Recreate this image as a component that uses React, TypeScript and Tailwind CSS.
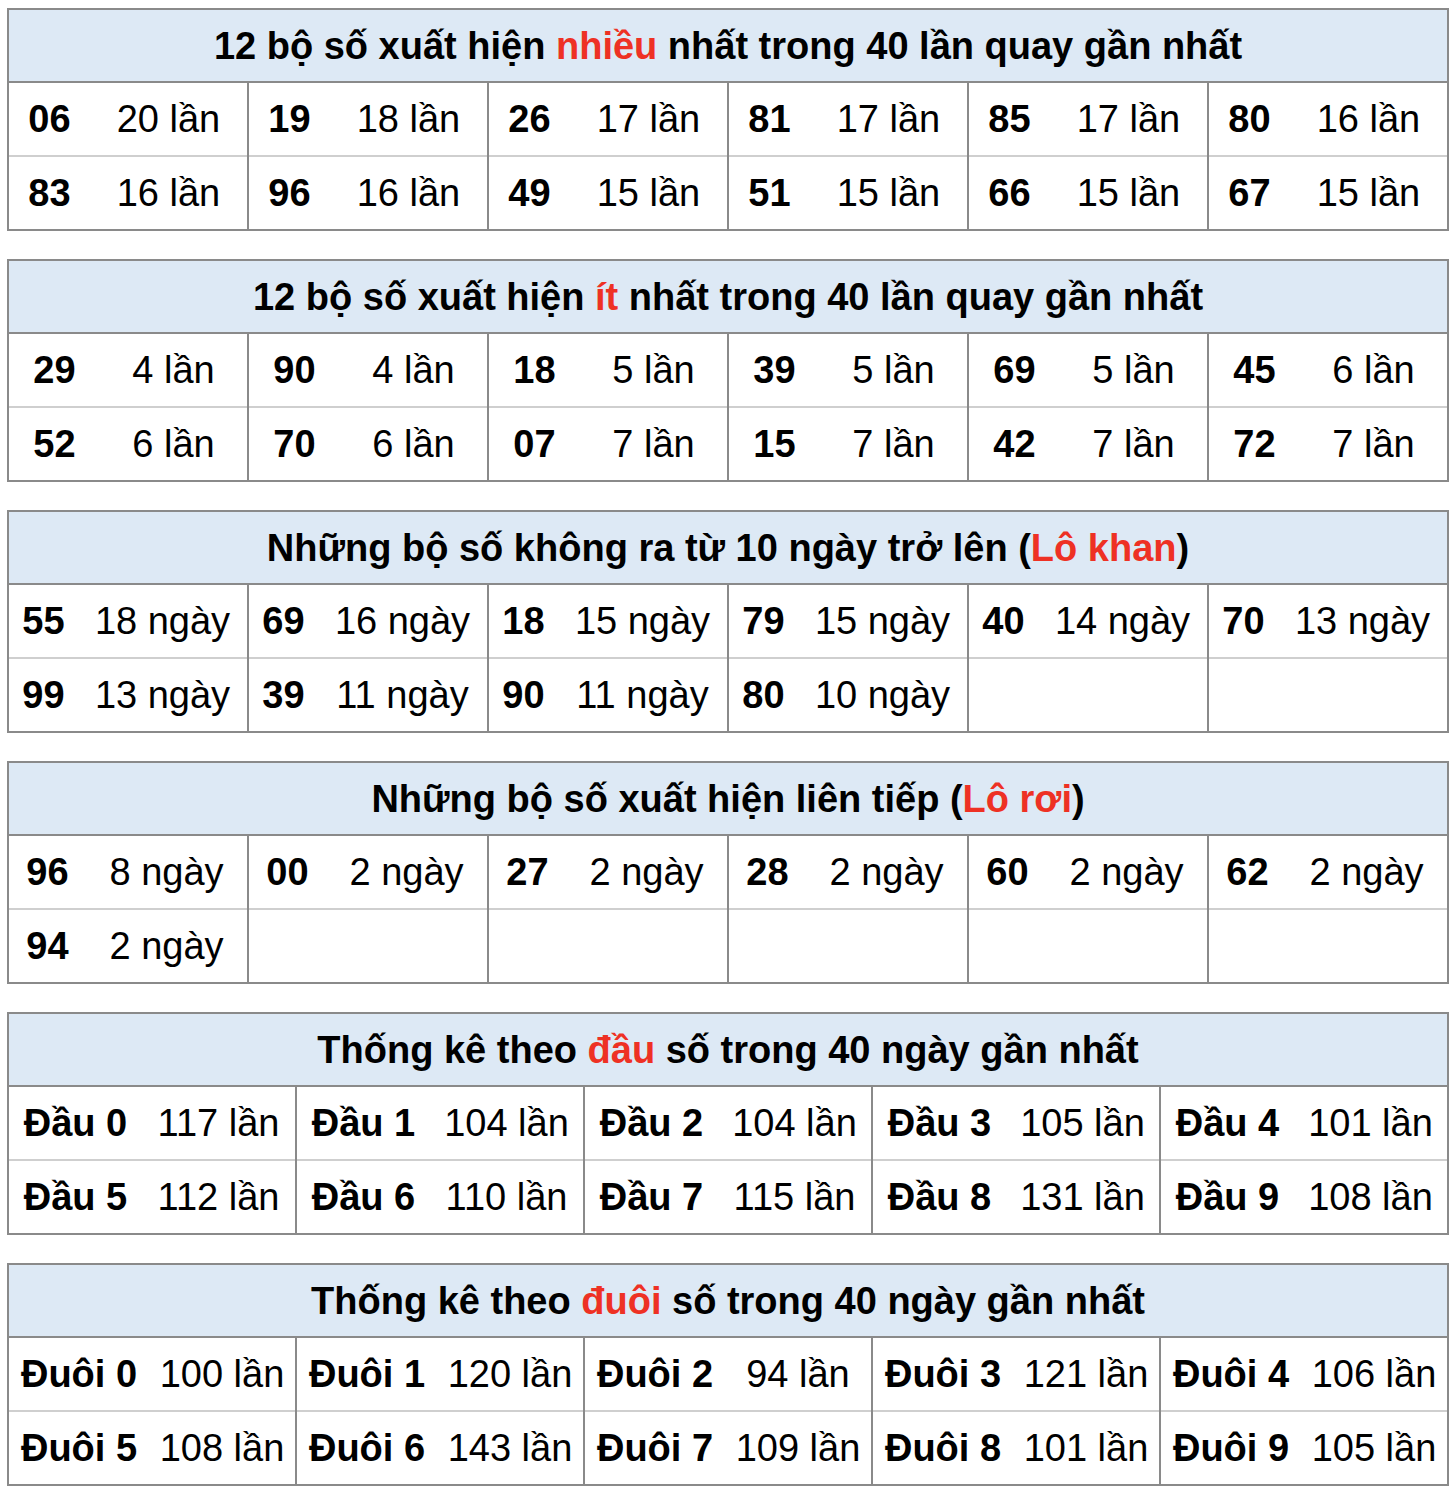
import React from "react";

type Cell = [string, string] | null;

const RED = "text-[#ee3124]";

function Table({
  title,
  cols,
  numW,
  rows,
}: {
  title: React.ReactNode;
  cols: 5 | 6;
  numW: string;
  rows: Cell[][];
}) {
  const gridCls = cols === 6 ? "grid grid-cols-6 gap-x-[2px] bg-[#8a8a8a]" : "grid grid-cols-5 gap-x-[2px] bg-[#8a8a8a]";
  return (
    <div className="ml-[7px] w-[1442px] border-2 border-[#8a8a8a] bg-white">
      <div className="h-[73px] flex items-center justify-center bg-[#dde9f5] border-b-2 border-[#8a8a8a] font-bold text-[38px] text-black leading-none">
        {title}
      </div>
      {rows.map((row, ri) => (
        <div key={ri} className={gridCls}>
          {row.map((c, ci) => (
            <div
              key={ci}
              className={
                "bg-white flex items-center text-[38px] text-black leading-none " +
                (ri === 0 ? "h-[74px] border-b-2 border-[#cfcfcf]" : "h-[72px]")
              }
            >
              {c && (
                <>
                  <div className={"shrink-0 text-center font-bold " + numW}>{c[0]}</div>
                  <div className="flex-1 text-center whitespace-nowrap">{c[1]}</div>
                </>
              )}
            </div>
          ))}
        </div>
      ))}
    </div>
  );
}

const lan = (n: number) => `${n} lần`;
const ngay = (n: number) => `${n} ngày`;

export default function App() {
  return (
    <div
      className="w-[1454px] min-h-[1490px] bg-white pt-[8px] pb-[5px] flex flex-col gap-[28px]"
      style={{ fontFamily: '"Liberation Sans", Arial, Helvetica, sans-serif' }}
    >
      <Table
        title={
          <span>
            12 bộ số xuất hiện <span className={RED}>nhiều</span> nhất trong 40 lần quay gần nhất
          </span>
        }
        cols={6}
        numW="w-[81px]"
        rows={[
          [["06", lan(20)], ["19", lan(18)], ["26", lan(17)], ["81", lan(17)], ["85", lan(17)], ["80", lan(16)]],
          [["83", lan(16)], ["96", lan(16)], ["49", lan(15)], ["51", lan(15)], ["66", lan(15)], ["67", lan(15)]],
        ]}
      />
      <Table
        title={
          <span>
            12 bộ số xuất hiện <span className={RED}>ít</span> nhất trong 40 lần quay gần nhất
          </span>
        }
        cols={6}
        numW="w-[91px]"
        rows={[
          [["29", lan(4)], ["90", lan(4)], ["18", lan(5)], ["39", lan(5)], ["69", lan(5)], ["45", lan(6)]],
          [["52", lan(6)], ["70", lan(6)], ["07", lan(7)], ["15", lan(7)], ["42", lan(7)], ["72", lan(7)]],
        ]}
      />
      <Table
        title={
          <span>
            Những bộ số không ra từ 10 ngày trở lên (<span className={RED}>Lô khan</span>)
          </span>
        }
        cols={6}
        numW="w-[69px]"
        rows={[
          [["55", ngay(18)], ["69", ngay(16)], ["18", ngay(15)], ["79", ngay(15)], ["40", ngay(14)], ["70", ngay(13)]],
          [["99", ngay(13)], ["39", ngay(11)], ["90", ngay(11)], ["80", ngay(10)], null, null],
        ]}
      />
      <Table
        title={
          <span>
            Những bộ số xuất hiện liên tiếp (<span className={RED}>Lô rơi</span>)
          </span>
        }
        cols={6}
        numW="w-[77px]"
        rows={[
          [["96", ngay(8)], ["00", ngay(2)], ["27", ngay(2)], ["28", ngay(2)], ["60", ngay(2)], ["62", ngay(2)]],
          [["94", ngay(2)], null, null, null, null, null],
        ]}
      />
      <Table
        title={
          <span>
            Thống kê theo <span className={RED}>đầu</span> số trong 40 ngày gần nhất
          </span>
        }
        cols={5}
        numW="w-[133px]"
        rows={[
          [["Đầu 0", lan(117)], ["Đầu 1", lan(104)], ["Đầu 2", lan(104)], ["Đầu 3", lan(105)], ["Đầu 4", lan(101)]],
          [["Đầu 5", lan(112)], ["Đầu 6", lan(110)], ["Đầu 7", lan(115)], ["Đầu 8", lan(131)], ["Đầu 9", lan(108)]],
        ]}
      />
      <Table
        title={
          <span>
            Thống kê theo <span className={RED}>đuôi</span> số trong 40 ngày gần nhất
          </span>
        }
        cols={5}
        numW="w-[140px]"
        rows={[
          [["Đuôi 0", lan(100)], ["Đuôi 1", lan(120)], ["Đuôi 2", lan(94)], ["Đuôi 3", lan(121)], ["Đuôi 4", lan(106)]],
          [["Đuôi 5", lan(108)], ["Đuôi 6", lan(143)], ["Đuôi 7", lan(109)], ["Đuôi 8", lan(101)], ["Đuôi 9", lan(105)]],
        ]}
      />
    </div>
  );
}
